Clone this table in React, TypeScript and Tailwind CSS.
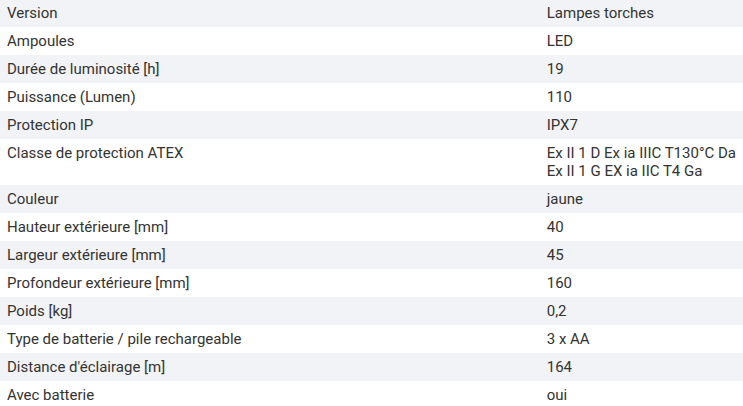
const rows: [string, string[]][] = [
  ["Version", ["Lampes torches"]],
  ["Ampoules", ["LED"]],
  ["Durée de luminosité [h]", ["19"]],
  ["Puissance (Lumen)", ["110"]],
  ["Protection IP", ["IPX7"]],
  ["Classe de protection ATEX", ["Ex II 1 D Ex ia IIIC T130°C Da", "Ex II 1 G EX ia IIC T4 Ga"]],
  ["Couleur", ["jaune"]],
  ["Hauteur extérieure [mm]", ["40"]],
  ["Largeur extérieure [mm]", ["45"]],
  ["Profondeur extérieure [mm]", ["160"]],
  ["Poids [kg]", ["0,2"]],
  ["Type de batterie / pile rechargeable", ["3 x AA"]],
  ["Distance d'éclairage [m]", ["164"]],
  ["Avec batterie", ["oui"]],
];

export default function App() {
  return (
    <div className="w-[743px] h-[406px] overflow-hidden bg-white font-['Roboto',sans-serif] text-[15px] leading-[18px] text-[#333]">
      <table className="w-full -mt-px border-collapse">
        <tbody>
          {rows.map(([label, values], i) => (
            <tr key={label} className={i % 2 === 0 ? "bg-[#f2f3f6]" : "bg-white"}>
              <td className="w-[541px] px-[7px] py-[5px] align-top">{label}</td>
              <td className="px-[7px] py-[5px] align-top whitespace-nowrap">
                {values.map((v) => (
                  <div key={v}>{v}</div>
                ))}
              </td>
            </tr>
          ))}
        </tbody>
      </table>
    </div>
  );
}
